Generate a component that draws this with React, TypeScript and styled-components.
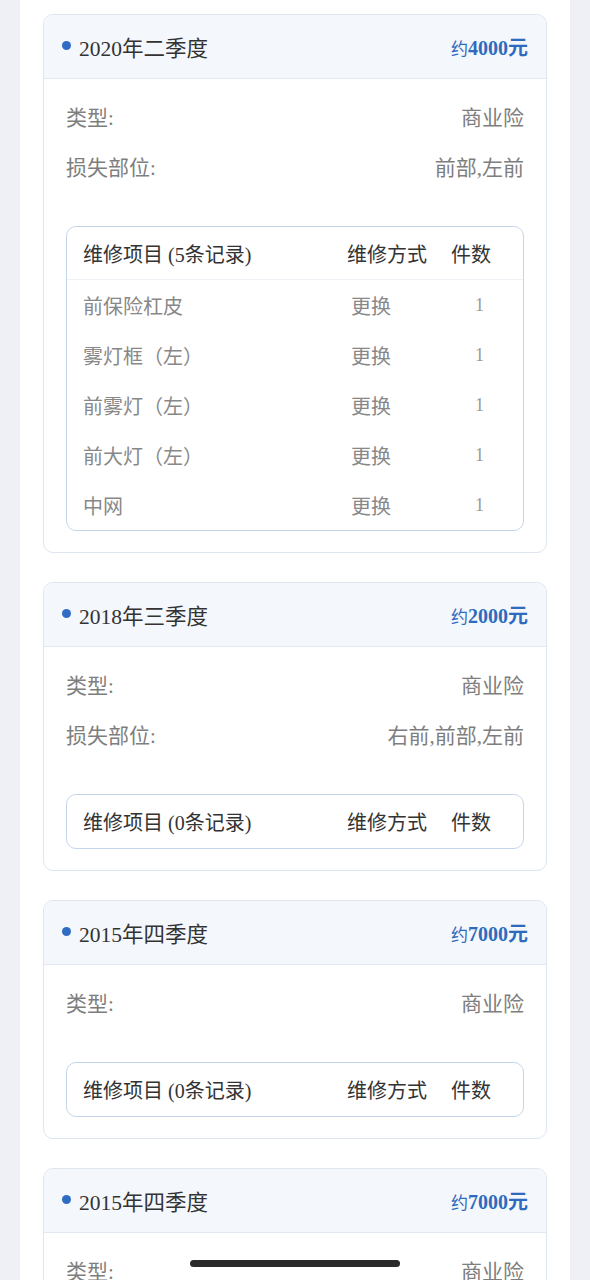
import React from "react";
import styled, { createGlobalStyle } from "styled-components";

const Global = createGlobalStyle`
  html, body { margin: 0; padding: 0; }
  body {
    background: #eff0f5;
    font-family: "Liberation Serif", "Noto Sans CJK SC", serif;
  }
  * { box-sizing: border-box; }
`;

const Page = styled.div`
  min-height: 1280px;
  padding: 0 20px;
  background: #eff0f5;
`;

const Panel = styled.div`
  background: #ffffff;
  min-height: 1280px;
  padding: 14px 23px;
  display: flex;
  flex-direction: column;
  gap: 29px;
`;

const Card = styled.section`
  border: 1px solid #dde5ef;
  border-radius: 10px;
  overflow: hidden;
  background: #fff;
`;

const Header = styled.div`
  height: 64px;
  background: #f4f7fc;
  border-bottom: 1px solid #e3e9f1;
  display: flex;
  align-items: center;
  justify-content: space-between;
  padding: 0 18px 0 18px;
`;

const Title = styled.div`
  display: flex;
  align-items: center;
  font-size: 21.5px;
  color: #333;
`;

const Dot = styled.span`
  width: 9px;
  height: 9px;
  border-radius: 50%;
  background: #2f6dc4;
  margin-right: 8px;
  margin-top: -2px;
`;

const Amount = styled.div`
  color: #2f6bbd;
  font-size: 20px;
  font-weight: bold;
  display: flex;
  align-items: baseline;
`;

const Approx = styled.span`
  font-size: 17px;
  font-weight: normal;
`;

const Body = styled.div`
  padding: 12px 22px 21px;
`;

const InfoRow = styled.div`
  height: 50px;
  display: flex;
  align-items: center;
  justify-content: space-between;
  font-size: 21px;
  color: #7e7e7e;
`;

const Table = styled.div`
  margin-top: 35px;
  border: 1px solid #c4d6ec;
  border-radius: 10px;
  overflow: hidden;
`;

const Grid = styled.div<{ $head?: boolean; $divider?: boolean }>`
  display: grid;
  grid-template-columns: 1fr 104px 56px;
  align-items: center;
  height: ${(p) => (p.$head ? "53px" : "50px")};
  padding: 0 16px;
  font-size: 20px;
  color: ${(p) => (p.$head ? "#333" : "#888")};
  border-bottom: ${(p) => (p.$divider ? "1px solid #eef1f5" : "none")};
`;

const Method = styled.span<{ $head?: boolean }>`
  padding-left: ${(p) => (p.$head ? "0" : "4px")};
`;

const Count = styled.span<{ $head?: boolean }>`
  padding-left: ${(p) => (p.$head ? "0" : "24px")};
  color: ${(p) => (p.$head ? "#333" : "#999")};
  font-size: ${(p) => (p.$head ? "20px" : "18px")};
`;

const HomeBar = styled.div`
  position: fixed;
  left: 190px;
  top: 1260px;
  width: 210px;
  height: 7px;
  border-radius: 4px;
  background: #2a2a2a;
`;

type Item = { name: string; method: string; count: number };
type Rec = {
  title: string;
  amount: string;
  type: string;
  loss?: string;
  items: Item[];
};

const front: Item[] = [
  { name: "前保险杠皮", method: "更换", count: 1 },
  { name: "雾灯框（左）", method: "更换", count: 1 },
  { name: "前雾灯（左）", method: "更换", count: 1 },
  { name: "前大灯（左）", method: "更换", count: 1 },
  { name: "中网", method: "更换", count: 1 },
];

const records: Rec[] = [
  { title: "2020年二季度", amount: "4000", type: "商业险", loss: "前部,左前", items: front },
  { title: "2018年三季度", amount: "2000", type: "商业险", loss: "右前,前部,左前", items: [] },
  { title: "2015年四季度", amount: "7000", type: "商业险", items: [] },
  { title: "2015年四季度", amount: "7000", type: "商业险", items: [] },
];

export default function App() {
  return (
    <>
      <Global />
      <Page>
        <Panel>
          {records.map((r, i) => (
            <Card key={i}>
              <Header>
                <Title>
                  <Dot />
                  {r.title}
                </Title>
                <Amount>
                  <Approx>约</Approx>
                  {r.amount}元
                </Amount>
              </Header>
              <Body>
                <InfoRow>
                  <span>类型:</span>
                  <span>{r.type}</span>
                </InfoRow>
                {r.loss && (
                  <InfoRow>
                    <span>损失部位:</span>
                    <span>{r.loss}</span>
                  </InfoRow>
                )}
                <Table>
                  <Grid $head $divider={r.items.length > 0}>
                    <span>维修项目 ({r.items.length}条记录)</span>
                    <Method $head>维修方式</Method>
                    <Count $head>件数</Count>
                  </Grid>
                  {r.items.map((it, j) => (
                    <Grid key={j}>
                      <span>{it.name}</span>
                      <Method>{it.method}</Method>
                      <Count>{it.count}</Count>
                    </Grid>
                  ))}
                </Table>
              </Body>
            </Card>
          ))}
        </Panel>
      </Page>
      <HomeBar />
    </>
  );
}
